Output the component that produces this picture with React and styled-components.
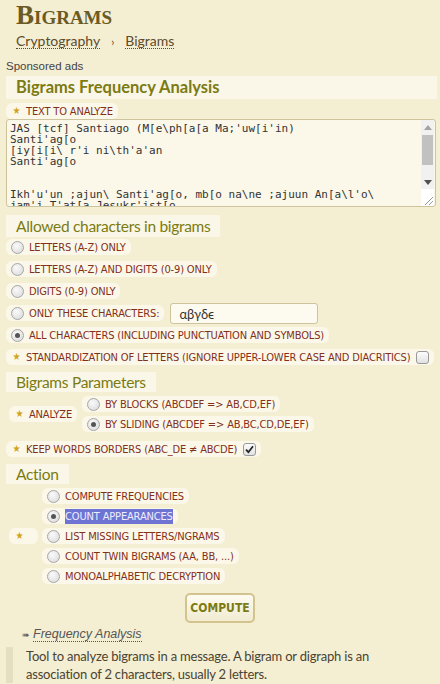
import React from 'react'
import styled, { createGlobalStyle } from 'styled-components'

const GlobalStyle = createGlobalStyle`
  html, body {
    margin: 0;
    padding: 0;
    background: #f4eed3;
    font-family: 'Liberation Sans', Arial, sans-serif;
    overflow: hidden;
  }
`

const labelFont = `'DejaVu Sans Condensed', 'Liberation Sans Narrow', 'DejaVu Sans', sans-serif`
const headFont = `'Lato', 'Open Sans', sans-serif`
const red = '#82301c'
const olive = '#7b7b12'

const Page = styled.div`
  width: 440px;
  height: 684px;
  overflow: hidden;
  box-sizing: border-box;
  padding: 0 3px 0 6px;
`

const Title = styled.h1`
  margin: 0;
  padding: 1px 0 0 10px;
  font-family: 'Liberation Serif', 'Times New Roman', serif;
  font-variant: small-caps;
  font-weight: bold;
  font-size: 27px;
  line-height: 28px;
  color: #6b5a24;
`

const Crumbs = styled.nav`
  display: flex;
  align-items: center;
  gap: 11px;
  padding: 3px 0 0 10px;
  height: 18px;
  font-family: ${headFont};
  font-size: 14px;
  color: #5d4b2b;
`

const Crumb = styled.a`
  color: inherit;
  text-decoration: none;
  border-bottom: 1px dotted #5d4b2b;
  line-height: 14px;
`

const Sep = styled.span`
  font-size: 11px;
`

const Sponsored = styled.div`
  margin-top: 10px;
  font-size: 11.5px;
  color: #444;
  height: 14px;
`

const Heading = styled.h2`
  margin: 2px 0 0;
  padding: 0 10px;
  height: 23px;
  line-height: 23px;
  background: #faf7e8;
  font-family: ${headFont};
  font-weight: bold;
  font-size: 16.5px;
  color: ${olive};
`

const SectionHead = styled.h3`
  align-self: flex-start;
  margin: ${(p) => p.$mt || 8}px 0 ${(p) => p.$mb || 3}px;
  padding: 0 10px;
  height: ${(p) => p.$h || 21}px;
  line-height: ${(p) => p.$h || 21}px;
  background: #faf7e8;
  font-family: ${headFont};
  font-weight: normal;
  font-size: 15.5px;
  letter-spacing: -0.3px;
  color: ${olive};
`

const Pill = styled.label`
  display: inline-flex;
  align-items: center;
  gap: 4px;
  height: 16px;
  padding: 0 5px;
  border-radius: 6px;
  background: #fbf8e9;
  font-family: ${labelFont};
  font-size: 11px;
  letter-spacing: -0.15px;
  color: ${red};
  white-space: nowrap;
`

const Star = styled.span`
  color: #d2a21a;
  font-size: 10px;
  width: 11px;
  text-align: center;
  line-height: 1;
`

const Radio = styled.span`
  width: 11px;
  height: 11px;
  border-radius: 50%;
  border: 1px solid #a6a6a6;
  background: radial-gradient(circle at 40% 35%, #fafafa, #d8d8d8);
  display: inline-flex;
  align-items: center;
  justify-content: center;
  flex: none;
  margin-right: 1px;
  &::after {
    content: '';
    width: 5px;
    height: 5px;
    border-radius: 50%;
    background: ${(p) => (p.$on ? '#555' : 'transparent')};
  }
`

const Check = styled.span`
  width: 11px;
  height: 11px;
  border-radius: 3px;
  border: 1px solid #999;
  background: linear-gradient(#fcfcfc, #e2e2e2);
  display: inline-flex;
  align-items: center;
  justify-content: center;
  margin-left: 2px;
  flex: none;
`

const Section = styled.section`
  display: flex;
  flex-direction: column;
  align-items: flex-start;
`

const Stack = styled.div`
  display: flex;
  flex-direction: column;
  align-items: flex-start;
  gap: ${(p) => p.$gap || 6}px;
`

const FieldRow = styled.div`
  display: flex;
  align-items: center;
  gap: ${(p) => p.$gap || 5}px;
  padding-left: ${(p) => p.$pl || 0}px;
  margin-top: ${(p) => p.$mt || 0}px;
`

const TextInput = styled.input`
  width: 148px;
  height: 21px;
  margin: -2px 0 -3px;
  box-sizing: border-box;
  border: 1px solid #cdc39d;
  border-radius: 3px;
  background: #fdfbf0;
  padding: 0 8px;
  font-family: ${headFont};
  font-size: 13px;
  color: #333;
  outline: none;
`

const TextBox = styled.div`
  display: flex;
  width: 430px;
  height: 88px;
  box-sizing: border-box;
  border: 1px solid #cdc39d;
  border-radius: 3px;
  background: #fbf8ea;
  overflow: hidden;
`

const TextArea = styled.textarea`
  flex: 1;
  margin: 0;
  padding: 3px 3px;
  border: none;
  background: transparent;
  font-family: 'DejaVu Sans Mono', monospace;
  font-size: 11px;
  line-height: 11px;
  color: #333;
  resize: none;
  overflow: hidden;
  outline: none;
  white-space: pre;
`

const ScrollBar = styled.div`
  width: 13px;
  margin-right: 1px;
  display: flex;
  flex-direction: column;
  background: #f1f1f1;
`

const ScrollBtn = styled.div`
  height: 14px;
  display: flex;
  align-items: center;
  justify-content: center;
  &::after {
    content: '';
    border-left: 4px solid transparent;
    border-right: 4px solid transparent;
    ${(p) =>
      p.$down
        ? 'border-top: 5px solid #505050;'
        : 'border-bottom: 5px solid #a3a3a3;'}
  }
`

const Track = styled.div`
  flex: 1;
  padding: 1px 1px 0;
`

const Thumb = styled.div`
  height: 30px;
  background: #c1c1c1;
`

const Resizer = styled.div`
  height: 17px;
  background: #fff;
  display: flex;
  align-items: flex-end;
  justify-content: flex-end;
`

const Selected = styled.span`
  background: #6e74d3;
  color: #eeeeff;
  padding: 1px 0;
`

const ButtonRow = styled.div`
  display: flex;
  justify-content: center;
  margin-top: 9px;
  padding-right: 3px;
`

const Button = styled.button`
  width: 70px;
  height: 30px;
  border: 2px solid #d3c48f;
  border-radius: 5px;
  background: linear-gradient(#fdfbf1, #f1ebd2);
  font-family: ${labelFont};
  font-weight: bold;
  font-size: 12px;
  color: ${olive};
  padding: 0;
`

const SeeAlso = styled.div`
  margin: 4px 0 0 16px;
  display: flex;
  align-items: center;
  gap: 3px;
  height: 16px;
  font-size: 12.5px;
  font-style: italic;
  color: #555;
  a {
    color: inherit;
    text-decoration: none;
    border-bottom: 1px dotted #555;
    line-height: 13px;
  }
`

const Arrow = styled.span`
  font-style: normal;
  font-size: 9px;
  color: #666;
`

const Description = styled.p`
  margin: 4px 0 0;
  padding: 0 40px 0 13px;
  border-left: 7px solid #e5dfc1;
  font-family: ${headFont};
  font-size: 13px;
  letter-spacing: -0.2px;
  line-height: 18px;
  color: #4b4331;
`

const cipher = `JAS [tcf] Santiago (M[e\\ph[a[a Ma;'uw[i'in)
Santi'ag[o
[iy[i[i\\ r'i ni\\th'a'an
Santi'ag[o


Ikh'u'un ;ajun\\ Santi'ag[o, mb[o na\\ne ;ajuun An[a\\l'o\\
jam'i T'at[a Jesukr'ist[o.`

const allowed = [
  'LETTERS (A-Z) ONLY',
  'LETTERS (A-Z) AND DIGITS (0-9) ONLY',
  'DIGITS (0-9) ONLY',
]

const actions = [
  'COMPUTE FREQUENCIES',
  'COUNT APPEARANCES',
  'LIST MISSING LETTERS/NGRAMS',
  'COUNT TWIN BIGRAMS (AA, BB, ...)',
  'MONOALPHABETIC DECRYPTION',
]

const CheckMark = () => (
  <svg width="9" height="9" viewBox="0 0 9 9">
    <path d="M1 4.6 L3.4 7.2 L8 1.2" fill="none" stroke="#222" strokeWidth="1.8" />
  </svg>
)

const Grip = () => (
  <svg width="12" height="12" viewBox="0 0 12 12">
    <path d="M11 3 L3 11 M11 7 L7 11" stroke="#999" strokeWidth="1" />
  </svg>
)

const App = () => (
  <Page>
    <GlobalStyle />
    <Title>Bigrams</Title>
    <Crumbs>
      <Crumb>Cryptography</Crumb>
      <Sep>›</Sep>
      <Crumb>Bigrams</Crumb>
    </Crumbs>
    <Sponsored>Sponsored ads</Sponsored>
    <Heading>Bigrams Frequency Analysis</Heading>

    <FieldRow $mt={4}>
      <Pill>
        <Star>★</Star>TEXT TO ANALYZE
      </Pill>
    </FieldRow>
    <TextBox>
      <TextArea spellCheck={false} defaultValue={cipher} />
      <ScrollBar>
        <ScrollBtn />
        <Track>
          <Thumb />
        </Track>
        <ScrollBtn $down />
        <Resizer>
          <Grip />
        </Resizer>
      </ScrollBar>
    </TextBox>

    <Section>
      <SectionHead $mt={8} $mb={2} $h={22}>Allowed characters in bigrams</SectionHead>
      <Stack>
        {allowed.map((t) => (
          <Pill key={t}>
            <Radio />
            {t}
          </Pill>
        ))}
        <FieldRow $gap={6}>
          <Pill>
            <Radio />
            ONLY THESE CHARACTERS:
          </Pill>
          <TextInput defaultValue="αβγδϵ" />
        </FieldRow>
        <Pill>
          <Radio $on />
          ALL CHARACTERS (INCLUDING PUNCTUATION AND SYMBOLS)
        </Pill>
        <Pill>
          <Star>★</Star>STANDARDIZATION OF LETTERS (IGNORE UPPER-LOWER CASE AND DIACRITICS)
          <Check />
        </Pill>
      </Stack>
    </Section>

    <Section>
      <SectionHead $mt={7} $mb={4} $h={20}>Bigrams Parameters</SectionHead>
      <FieldRow $pl={3} $gap={5}>
        <Pill>
          <Star>★</Star>ANALYZE
        </Pill>
        <Stack $gap={4}>
          <Pill>
            <Radio />
            BY BLOCKS (ABCDEF =&gt; AB,CD,EF)
          </Pill>
          <Pill>
            <Radio $on />
            BY SLIDING (ABCDEF =&gt; AB,BC,CD,DE,EF)
          </Pill>
        </Stack>
      </FieldRow>
      <FieldRow $mt={9}>
        <Pill>
          <Star>★</Star>KEEP WORDS BORDERS (ABC_DE ≠ ABCDE)
          <Check>
            <CheckMark />
          </Check>
        </Pill>
      </FieldRow>
    </Section>

    <Section>
      <SectionHead $mt={7} $mb={4} $h={20}>Action</SectionHead>
      <FieldRow $pl={3} $gap={4}>
        <Pill>
          <Star>★</Star>
          <span style={{ width: 4 }} />
        </Pill>
        <Stack $gap={4}>
          {actions.map((t, i) => (
            <Pill key={t}>
              <Radio $on={i === 1} />
              {i === 1 ? <Selected>{t}</Selected> : t}
            </Pill>
          ))}
        </Stack>
      </FieldRow>
    </Section>

    <ButtonRow>
      <Button>COMPUTE</Button>
    </ButtonRow>

    <SeeAlso>
      <Arrow>➠</Arrow>
      <a>Frequency Analysis</a>
    </SeeAlso>
    <Description>
      Tool to analyze bigrams in a message. A bigram or digraph is an association of 2 characters, usually 2 letters.
    </Description>
  </Page>
)

export default App
